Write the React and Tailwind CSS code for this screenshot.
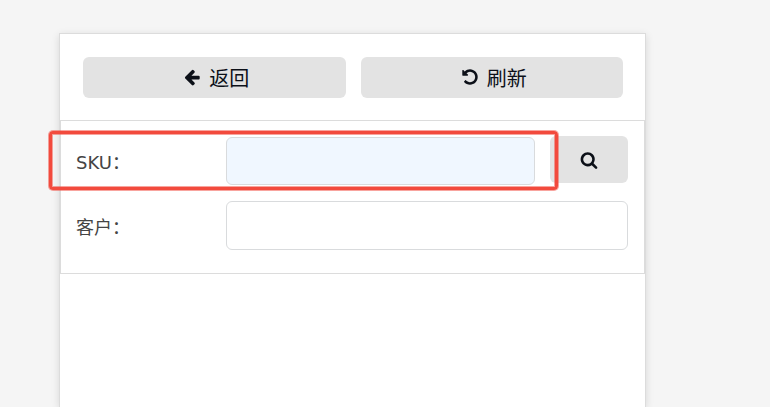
import React from 'react'

const ArrowIcon = () => (
  <svg viewBox="0 0 1792 1792" className="w-[18px] h-[18px] mb-1" fill="currentColor" aria-hidden="true">
    <path d="M1664 896v128q0 53-32.5 90.5t-84.5 37.5h-704l293 294q38 36 38 90t-38 90l-75 76q-37 37-90 37-52 0-91-37l-651-652q-37-37-37-90 0-52 37-91l651-650q38-38 91-38 52 0 90 38l75 74q38 38 38 91t-38 91l-293 293h704q52 0 84.5 37.5t32.5 90.5z" />
  </svg>
)

const UndoIcon = () => (
  <svg viewBox="0 0 1792 1792" className="w-[18px] h-[18px] mb-1" fill="currentColor" aria-hidden="true">
    <path d="M1664 896q0 156-61 298t-164 245-245 164-298 61q-172 0-327-72.5t-264-204.5q-7-10-6.5-22.5t8.5-20.5l137-138q10-9 25-9 16 2 23 12 73 95 179 147t225 52q104 0 198.5-40.5t163.5-109.5 109.5-163.5 40.5-198.5-40.5-198.5-109.5-163.5-163.5-109.5-198.5-40.5q-98 0-188 35.5t-160 101.5l137 138q31 30 14 69-17 40-59 40h-448q-26 0-45-19t-19-45v-448q0-42 40-59 39-17 69 14l130 129q107-101 244.5-156.5t284.5-55.5q156 0 298 61t245 164 164 245 61 298z" />
  </svg>
)

const SearchIcon = () => (
  <svg viewBox="0 0 1792 1792" className="w-[18px] h-[18px]" fill="currentColor" aria-hidden="true">
    <path d="M1216 832q0-185-131.5-316.5t-316.5-131.5-316.5 131.5-131.5 316.5 131.5 316.5 316.5 131.5 316.5-131.5 131.5-316.5zm512 832q0 52-38 90t-90 38q-54 0-90-38l-343-342q-179 124-399 124-143 0-273.5-55.5t-225-150-150-225-55.5-273.5 55.5-273.5 150-225 225-150 273.5-55.5 273.5 55.5 225 150 150 225 55.5 273.5q0 220-124 399l343 343q37 37 37 90z" />
  </svg>
)

const actions = [
  { label: '返回', Icon: ArrowIcon },
  { label: '刷新', Icon: UndoIcon },
]

const inputClass = 'min-w-0 flex-1 px-3 rounded-md border border-[#d9dbdd] text-lg text-[#444] outline-none'
const labelClass = 'w-[150px] shrink-0 pt-1 text-lg text-[#444]'

export default function App() {
  return (
    <div className="min-h-screen flex bg-[#f5f5f5] pt-[33px] pl-[59px] pr-[124px] font-['DejaVu_Sans','Noto_Sans_CJK_SC',sans-serif]">
      <main className="flex-1 min-w-0 bg-white border border-b-0 border-[#dcdcdc] shadow-[0_2px_8px_rgba(0,0,0,0.12)]">
        <div className="flex gap-[15px] pl-[23px] pr-[22px] pt-[23px] pb-[22px]">
          {actions.map(({ label, Icon }) => (
            <button
              key={label}
              type="button"
              className="flex-1 h-[41px] flex items-center justify-center gap-2 pl-1 pt-0.5 rounded-md bg-[#e3e3e3] text-xl text-[#0c1018]"
            >
              <Icon />
              {label}
            </button>
          ))}
        </div>

        <form className="flex flex-col gap-4 border border-[#dcdcdc] pl-[15px] pr-4 pt-[15px] pb-[23px]">
          <div className="relative flex items-center h-[49px]">
            <label htmlFor="sku" className={labelClass}>SKU：</label>
            <input id="sku" type="text" className={`${inputClass} h-12 bg-[#f0f7ff]`} />
            <button
              type="button"
              aria-label="Search"
              className="self-start ml-[15px] w-[78px] h-[47px] flex items-center justify-center rounded-md bg-[#e3e3e3] text-[#0c1018]"
            >
              <SearchIcon />
            </button>
            <div className="absolute -left-[27px] right-[70px] -inset-y-[5px] rounded-sm border-3 border-[#f24a3d] shadow-[0_0_0_1px_rgba(242,74,61,0.5),inset_0_0_0_1px_rgba(242,74,61,0.5)] pointer-events-none" />
          </div>
          <div className="flex items-center h-[49px]">
            <label htmlFor="customer" className={labelClass}>客户：</label>
            <input id="customer" type="text" className={`${inputClass} h-[49px] bg-white`} />
          </div>
        </form>
      </main>
    </div>
  )
}
